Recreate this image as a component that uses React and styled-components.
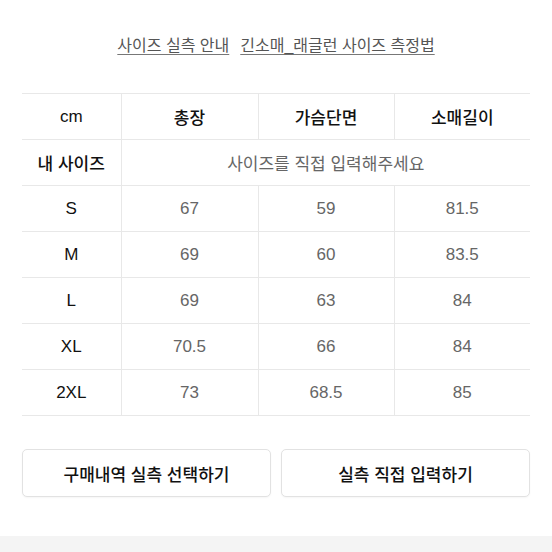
import React from 'react';
import styled, { createGlobalStyle } from 'styled-components';

const Global = createGlobalStyle`
  html, body {
    margin: 0;
    padding: 0;
    background: #fff;
    font-family: 'Liberation Sans', 'Noto Sans CJK KR', sans-serif;
  }
`;

const Page = styled.div`
  width: 552px;
  height: 552px;
  display: flex;
  flex-direction: column;
  overflow: hidden;
`;

const Links = styled.div`
  display: flex;
  justify-content: center;
  gap: 11px;
  padding-top: 33px;
  height: 60px;
  box-sizing: border-box;
`;

const GuideLink = styled.a`
  font-size: 16px;
  line-height: 26px;
  color: #555;
  text-decoration: underline;
  text-underline-offset: 3px;
  text-decoration-color: #777;
`;

const Table = styled.table`
  margin: 33px 0 0 22px;
  width: 508px;
  border-collapse: collapse;
  table-layout: fixed;
`;

const Cell = styled.td`
  height: 45px;
  padding: 0;
  text-align: center;
  border-top: 1.5px solid #e8e8e8;
  border-bottom: 1.5px solid #e8e8e8;
  border-left: ${p => (p.$first ? 'none' : '1.5px solid #e8e8e8')};
  font-size: 17px;
  font-weight: ${p => (p.$head ? 500 : 400)};
  color: ${p => (p.$muted ? '#666' : '#111')};
`;

const Buttons = styled.div`
  display: flex;
  gap: 10px;
  padding: 0 22px;
  margin-top: 33px;
`;

const Btn = styled.button`
  flex: 1;
  height: 48px;
  border: 1px solid #e2e2e2;
  border-radius: 5px;
  background: #fff;
  box-shadow: 0 1px 2px rgba(0, 0, 0, 0.04);
  font-family: inherit;
  font-size: 17px;
  font-weight: 500;
  color: #111;
`;

const Footer = styled.div`
  margin-top: auto;
  height: 16px;
  background: #f4f4f4;
`;

const rows = [
  ['S', '67', '59', '81.5'],
  ['M', '69', '60', '83.5'],
  ['L', '69', '63', '84'],
  ['XL', '70.5', '66', '84'],
  ['2XL', '73', '68.5', '85'],
];

export default function App() {
  return (
    <Page>
      <Global />
      <Links>
        <GuideLink>사이즈 실측 안내</GuideLink>
        <GuideLink>긴소매_래글런 사이즈 측정법</GuideLink>
      </Links>
      <Table>
        <colgroup>
          <col style={{ width: 99 }} />
          <col style={{ width: 137 }} />
          <col style={{ width: 136 }} />
          <col style={{ width: 136 }} />
        </colgroup>
        <tbody>
          <tr>
            <Cell $first $head>cm</Cell>
            <Cell $head>총장</Cell>
            <Cell $head>가슴단면</Cell>
            <Cell $head>소매길이</Cell>
          </tr>
          <tr>
            <Cell $first $head>내 사이즈</Cell>
            <Cell colSpan={3} $muted>사이즈를 직접 입력해주세요</Cell>
          </tr>
          {rows.map(r => (
            <tr key={r[0]}>
              <Cell $first $head>{r[0]}</Cell>
              <Cell $muted>{r[1]}</Cell>
              <Cell $muted>{r[2]}</Cell>
              <Cell $muted>{r[3]}</Cell>
            </tr>
          ))}
        </tbody>
      </Table>
      <Buttons>
        <Btn>구매내역 실측 선택하기</Btn>
        <Btn>실측 직접 입력하기</Btn>
      </Buttons>
      <Footer />
    </Page>
  );
}
